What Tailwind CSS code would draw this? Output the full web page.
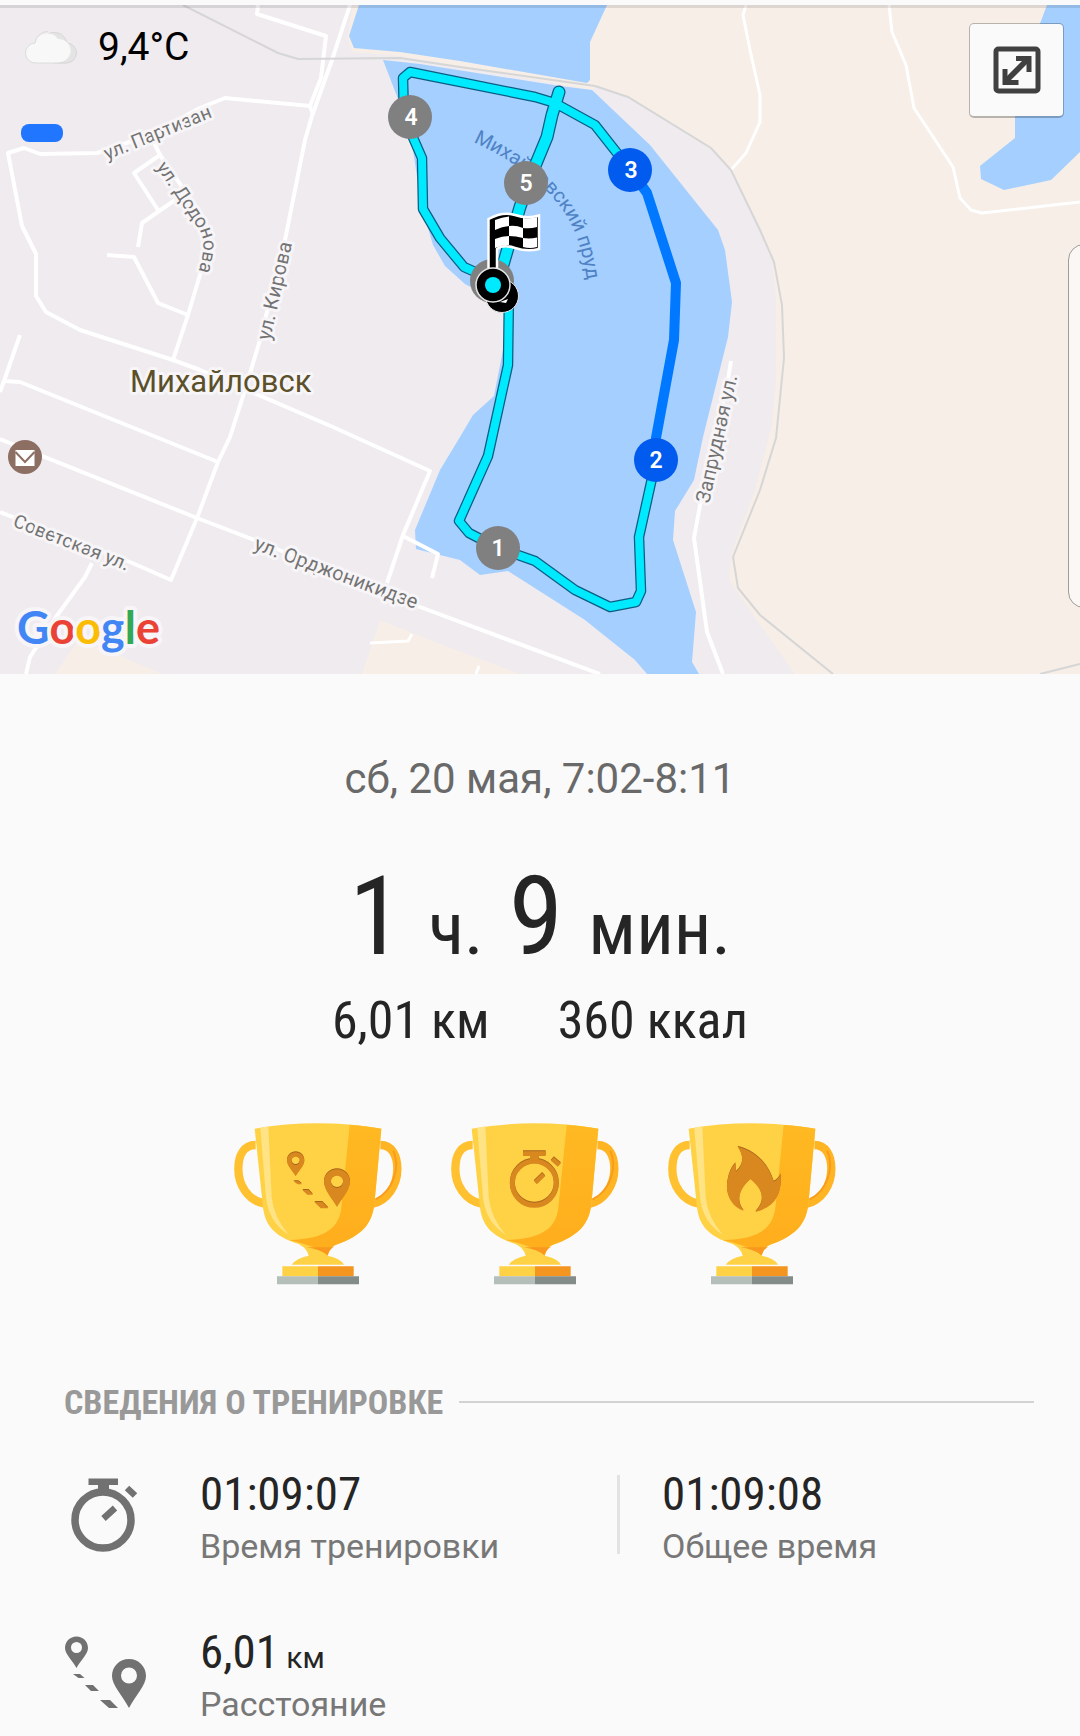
<!DOCTYPE html>
<html lang="ru">
	<head>
		<meta charset="UTF-8" />
		<meta name="viewport" content="width=device-width, initial-scale=1.0" />
		<title>Тренировка</title>
		<script src="https://cdn.jsdelivr.net/npm/@tailwindcss/browser@4"></script>
	</head>
	<body class="bg-[#fafafa] pt-[5px] font-['Roboto',sans-serif] text-[#252525]">
		<!-- map -->
		<section class="relative overflow-hidden">
			<svg viewBox="0 5 1080 669" class="block w-full bg-[#efebef]" role="img" aria-label="Карта маршрута">
				<!-- land -->
				<g fill="#f6eee7">
					<path d="M607 5L590 42V82L628 97L711 148L731 170L760 230L772 262L776 300V380L772 425L755 490L731 555L729 580L760 625L795 674H1080V5Z" />
					<path d="M353 5L347 38L352 52L400 56L560 84L592 90L600 84L590 5Z" />
					<path d="M78 640L55 674H162L125 658Z" />
					<path d="M380 620L362 674H520L430 640Z" />
				</g>
				<!-- water -->
				<g fill="#a4cfff">
					<path d="M359 5L349 36L354 48L400 52L460 61L587 83L590 80V42L607 5Z" />
					<path d="M383 60L420 64L560 86L592 90L650 145L718 230L725 250L732 302L728 337L703 437L694 480L675 511L673 540L696 612L692 662L699 674H647L635 660L585 620L508 571L480 575L460 560L440 555L416 549L415 530L440 470L460 437L473 415L494 396L503 350L509 300L480 292L465 284L445 266L433 245L422 208L416 170L410 130Z" />
					<path d="M1047 5L1015 90V138L980 166L981 179L1004 190L1051 180L1080 152V5Z" />
				</g>
				<!-- streets -->
				<g fill="none" stroke="#fff" stroke-width="4" stroke-linejoin="round">
					<path d="M258 5L257 14L326 36L321 78L310 106L313 114" />
					<path d="M350 5L332 60L312 116L305 140L285 240L260 340L245 390L230 437L218 462L197 518L171 580L130 562L0 512" />
					<path d="M310 106L225 98L200 108L150 135L97 153L40 154L24 148L8 153L22 226L36 254V296L46 312L80 330L173 360L200 370L333 427L430 471L403 535L387 583" />
					<path d="M403 536L438 554L432 578" />
					<path d="M150 135L160 155L134 173L158 210M175 200L142 223L138 247M107 255L134 257L158 303L188 315" />
					<path d="M160 155L205 220L208 248L188 315L173 360" />
					<path d="M20 335L4 381L0 392M4 381L20 382L218 462" />
					<path d="M0 439L197 518L257 541L420 607L600 674" />
					<path d="M92 563L85 577L56 617L30 657L26 674" />
					<path d="M731 361L728 380L701 500L694 538L707 632L723 674" />
					<path d="M746 5L743 15L750 50L760 95V122L746 153L731 170" stroke-width="3" />
					<path d="M889 5L892 32L906 65L914 108L953 167L960 198L971 210L982 213L1080 202" stroke-width="3" />
					<path d="M370 643L408 641L412 634M479 666L476 674" stroke-width="3" />
				</g>
				<!-- railway -->
				<g fill="none" stroke="#d6d6d6" stroke-width="2">
					<path d="M183 5L278 53L298 59L400 58L460 67L595 86L628 97L711 148L731 170L760 230L774 262L782 305L784 358L776 438L760 490L733 557L738 588L760 615L833 674" />
					<path d="M1040 674L1080 664" />
				</g>

				<!-- labels -->
				<defs>
					<path id="partizan" d="M107 160L230 110" />
					<path id="dodonova" d="M156 167L198 228Q209 243 197 275" />
					<path id="kirova" d="M270 341L296 226" />
					<path id="zaprud" d="M709 504L741 360" />
					<path id="sovet" d="M12 526L150 580" />
					<path id="ordzh" d="M253 549L450 622" />
					<path id="prud" d="M473 142Q548 176 573 228Q583 248 590 300" />
				</defs>
				<g font-family="Roboto" font-size="20" fill="#737373" stroke="#f7f5f7" stroke-width="6" stroke-linejoin="round" paint-order="stroke">
					<text font-size="19"><textPath href="#partizan">ул. Партизан</textPath></text>
					<text font-size="19"><textPath href="#dodonova">ул. Додонова</textPath></text>
					<text><textPath href="#kirova">ул. Кирова</textPath></text>
					<text><textPath href="#zaprud">Запрудная ул.</textPath></text>
					<text font-size="19"><textPath href="#sovet">Советская ул.</textPath></text>
					<text><textPath href="#ordzh">ул. Орджоникидзе</textPath></text>
					<text x="130" y="392" font-size="31" fill="#5b5029">Михайловск</text>
				</g>
				<text font-family="Roboto" font-size="20" fill="#4f82c4"><textPath href="#prud">Михайловский пруд</textPath></text>

				<!-- post office -->
				<circle cx="25" cy="457" r="17" fill="#8d6e63" />
				<path d="M15.500 450H34.500V466H15.500Z" fill="#fff" />
				<path d="M15.500 452L25 462L34.500 452" fill="none" stroke="#8d6e63" stroke-width="2" />

				<!-- route -->
				<g fill="none" stroke-linejoin="round">
					<g stroke="#0c5c80" stroke-width="10.500">
						<path d="M509 290L508 365L488 456L459 521L469 533L498 548L535 561L575 590L610 607L636 602L641 591L639 537L656 460" />
						<path d="M632 172L595 125L555 103L535 97L410 72L403 78L404 117L422 158L423 209L440 238L464 267L493 280" />
						<path d="M559 92L552 115L547 137L535 166L520 207L503 265" stroke-width="13" stroke-linecap="round" />
					</g>
					<g stroke="#00eaff" stroke-width="8">
						<path d="M509 290L508 365L488 456L459 521L469 533L498 548L535 561L575 590L610 607L636 602L641 591L639 537L656 460" />
						<path d="M632 172L595 125L555 103L535 97L410 72L403 78L404 117L422 158L423 209L440 238L464 267L493 280" />
						<path d="M559 92L552 115L547 137L535 166L520 207L503 265" stroke-width="10.500" stroke-linecap="round" />
					</g>
					<path d="M656 460V438L674 340L676 283L647 193L632 172" stroke="#0078ff" stroke-width="10" />
				</g>
				<g fill="#808080">
					<circle cx="410" cy="117" r="22" />
					<circle cx="526" cy="183" r="22" />
					<circle cx="498" cy="548" r="22" />
					<circle cx="492" cy="281" r="22" />
				</g>
				<g fill="#005bee">
					<circle cx="630" cy="170" r="22" />
					<circle cx="656" cy="460" r="22" />
				</g>
				<g font-family="Roboto" font-size="23" font-weight="600" fill="#fff" text-anchor="middle">
					<text x="411" y="125">4</text>
					<text x="526" y="191">5</text>
					<text x="631" y="178">3</text>
					<text x="656" y="468">2</text>
					<text x="498" y="556">1</text>
				</g>
				<!-- start and finish -->
				<circle cx="502" cy="296" r="16.500" fill="#000" stroke="#e6e6e6" />
				<path d="M500 302L508 299L506 303Z" fill="#fff" />
				<path d="M488.500 219Q503 211 515 215Q527 219 539 215.500V249Q527 252 515 248Q503 244 497 249V272H488.500Z" fill="#000" stroke="#fff" stroke-width="2.500" />
				<g fill="#fff">
					<path d="M495 220Q502 217 509 216.500V226Q502 226.500 495 230Z" />
					<path d="M523 218Q531 219 537 217V227Q530 229 523 228Z" />
					<path d="M509 226Q516 225 523 228V238Q516 236 509 236Z" />
					<path d="M495 239Q502 236 509 236V245Q502 245 495 248Z" />
					<path d="M523 238Q530 239 537 237.500V247Q530 249 523 247Z" />
				</g>
				<circle cx="493" cy="285" r="17" fill="#000" stroke="#e6e6e6" stroke-width="1.500" />
				<circle cx="493" cy="285" r="8" fill="#00eaff" />

				<g font-family="Lato" font-size="45" font-weight="700" stroke="#f7f5f7" stroke-width="8" stroke-linejoin="round" paint-order="stroke">
					<text x="17" y="644"><tspan fill="#4285f4">G</tspan><tspan fill="#ea4335">o</tspan><tspan fill="#fbbc05">o</tspan><tspan fill="#4285f4">g</tspan><tspan fill="#34a853">l</tspan><tspan fill="#ea4335">e</tspan></text>
				</g>
			</svg>

			<div class="absolute inset-x-0 top-0 h-[3px] bg-black/10"></div>
			<div class="absolute left-6 top-5 flex items-center gap-5 text-[39px] leading-[44px] text-black">
				<svg viewBox="0 0 54 36" class="h-9 w-[54px]">
					<path d="M30 34H42A10 10 0 0 0 43 14A13 13 0 0 0 24 5Z" fill="#e4e4e4" stroke="#d8d8d8" />
					<path d="M12 34A10 10 0 0 1 11 14A13 13 0 0 1 34 10A11 11 0 0 1 36 33Q34 34 30 34Z" fill="#f8f8f8" />
					<path d="M42 34H12A10 10 0 0 1 11 14A13 13 0 0 1 24 2.500" fill="none" stroke="#dcdcdc" />
				</svg>
				<span>9,4°C</span>
			</div>
			<div class="absolute left-[21px] top-[119px] h-[18px] w-[42px] rounded-lg bg-[#2176ff]"></div>
			<button class="absolute right-4 top-[18px] grid size-[95px] place-items-center rounded-[5px] border border-b-2 border-black/25 bg-[#fafafa] bg-clip-padding" aria-label="Развернуть карту">
				<svg viewBox="0 0 48 48" class="size-12" fill="none" stroke="#404040">
					<rect x="3" y="3" width="42" height="42" rx="2.500" stroke-width="5" />
					<path d="M14 34L34 14" stroke-width="5.500" />
					<path d="M23 12.500H36V26M12 23V36.500H25.500" stroke-width="5" />
				</svg>
			</button>
			<div class="absolute -right-6 top-[239px] h-[364px] w-9 rounded-2xl border border-[#a09c99] bg-[#faf7f5]"></div>
		</section>

		<!-- summary -->
		<section class="flex flex-col items-center pt-[80px]">
			<p class="text-[42px] leading-[50px] text-[#696969]">сб, 20 мая, 7:02-8:11</p>
			<h1 class="mt-[57px] flex items-baseline font-['Roboto_Condensed','Roboto',sans-serif] text-[110px] leading-[112px] whitespace-pre">1 <span class="text-[74px]">ч.</span> 9 <span class="text-[74px]">мин.</span></h1>
			<p class="mt-1 flex gap-[68px] font-['Roboto_Condensed','Roboto',sans-serif] text-[52px] leading-[64px]">
				<span>6,01 км</span>
				<span>360 ккал</span>
			</p>
			<div class="mt-[70px] flex gap-[39px]">
				<svg viewBox="41 67 534 486" class="h-[162px] w-[178px]">
					<defs>
						<linearGradient id="shade" x1="0" x2="0" y1="0" y2="1">
							<stop offset="0" stop-color="#ffb922" />
							<stop offset="1" stop-color="#ffad1c" />
						</linearGradient>
						<g id="cup">
							<path d="M106 133C70 133 54 165 54 205C54 255 85 300 130 308" fill="none" stroke="#ffc130" stroke-width="25" />
							<path d="M480 133C515 133 531 165 531 205C531 255 500 300 455 310" fill="none" stroke="#ffb424" stroke-width="25" />
							<path d="M519 150C540 200 520 270 466 296" fill="none" stroke="#f99c1c" stroke-width="6" />
							<path d="M103 84Q290 52 483 84L463 300C458 370 425 405 345 433Q325 445 322 465Q360 472 371 492H214Q228 472 265 465Q262 445 235 430C160 405 130 375 126 300Z" fill="#ffd246" />
							<path d="M388 73Q440 76 483 84L463 300C458 370 425 405 345 433Q330 440 322 465Q300 440 205 418C320 415 360 380 364 310Z" fill="url(#shade)" />
							<path d="M258 440H340Q325 447 321 464Q300 446 258 440Z" fill="#f9981d" />
							<path d="M120 81L144 77L154 290Q160 350 205 402Q145 365 137 290Z" fill="#ffe384" />
							<path d="M186 497H293V527H186Z" fill="#ffd246" />
							<path d="M293 497H400V527H293Z" fill="#f4951f" />
							<path d="M170 527H293V551H170Z" fill="#b4bfba" />
							<path d="M293 527H416V551H293Z" fill="#838c88" />
						</g>
						<g id="pins" fill-rule="evenodd">
							<path d="M226 152C211 152 200 163 200 178C200 192 216 207 226 224C236 207 252 192 252 178C252 163 241 152 226 152ZM226 165A12.500 12.500 0 1 1 226 190A12.500 12.500 0 1 1 226 165Z" />
							<path d="M350 203C328 203 311 220 311 241C311 265 335 290 350 316C365 290 389 265 389 241C389 220 372 203 350 203ZM350 222A18.500 18.500 0 1 1 350 259A18.500 18.500 0 1 1 350 222Z" />
							<path d="M219 239H234L245 248H232ZM246 265H265L278 279H261ZM282 301H306L324 320H301Z" />
						</g>
					</defs>
					<use href="#cup" />
					<use href="#pins" fill="#a8651c" />
					<use href="#pins" y="3" fill="#d9871f" />
				</svg>
				<svg viewBox="41 67 534 486" class="h-[162px] w-[178px]">
					<defs>
						<g id="watch">
							<circle cx="291" cy="245" r="66" fill="none" stroke-width="15" />
							<path d="M257 149H325V163H304V177H278V163H257Z" stroke="none" />
							<path d="M345 172L366 190" fill="none" stroke-width="14" />
							<path d="M294 243L319 219" fill="none" stroke-width="13" />
						</g>
					</defs>
					<use href="#cup" />
					<use href="#watch" fill="#a8651c" stroke="#a8651c" />
					<use href="#watch" y="3" fill="#d9871f" stroke="#d9871f" />
				</svg>
				<svg viewBox="41 67 534 486" class="h-[162px] w-[178px]">
					<defs>
						<path id="flame" d="M250 135C310 150 345 195 358 240Q371 235 379 218C383 275 365 315 303 331C338 295 322 260 288 233C252 265 245 300 268 328C225 312 212 270 220 235Q225 205 243 185L245 210C268 190 270 165 250 135Z" />
					</defs>
					<use href="#cup" />
					<use href="#flame" fill="#a8651c" />
					<use href="#flame" y="3" fill="#d9871f" />
				</svg>
			</div>
		</section>

		<!-- details -->
		<section class="pt-[94px] pr-[46px] pl-16">
			<h2 class="flex items-center gap-4 font-['Roboto_Condensed','Roboto',sans-serif] text-[34px] leading-[46px] font-bold text-[#999]">
				СВЕДЕНИЯ О ТРЕНИРОВКЕ
				<span class="h-[2px] grow bg-[#d3d3d3]"></span>
			</h2>
			<div class="mt-10 flex items-start">
				<svg viewBox="0 0 136 90" class="mt-0.5 h-[90px] w-[136px] shrink-0" fill="none" stroke="#717171">
					<circle cx="39" cy="53" r="28" stroke-width="7.500" />
					<path d="M24.500 11.500H54V18H45V25H34V18H24.500Z" fill="#717171" stroke="none" />
					<path d="M63 21L71 28.500M39.500 51.500L51 41" stroke-width="6.500" />
				</svg>
				<dl class="grid grow grid-cols-2">
					<div class="flex flex-col-reverse">
						<dt class="text-[34px] leading-[46px] text-[#777]">Время тренировки</dt>
						<dd class="font-['Roboto_Condensed','Roboto',sans-serif] text-[47px] leading-[58px]">01:09:07</dd>
					</div>
					<div class="relative flex flex-col-reverse pl-[45px] before:absolute before:top-[10px] before:left-0 before:h-[79px] before:w-[3px] before:bg-[#e3e3e3]">
						<dt class="text-[34px] leading-[46px] text-[#777]">Общее время</dt>
						<dd class="font-['Roboto_Condensed','Roboto',sans-serif] text-[47px] leading-[58px]">01:09:08</dd>
					</div>
				</dl>
			</div>
			<div class="mt-[54px] flex items-start">
				<svg viewBox="0 0 136 90" class="mt-0.5 h-[90px] w-[136px] shrink-0" fill="#717171" fill-rule="evenodd">
					<path d="M12.500 11.500C6 11.500 1 16.500 1 23C1 29 8 35 12.500 43C17 35 24 29 24 23C24 16.500 19 11.500 12.500 11.500ZM12.500 17A5.500 5.500 0 1 1 12.500 28A5.500 5.500 0 1 1 12.500 17Z" />
					<path d="M65 34C55.500 34 48 41.500 48 51C48 60 58 70 65 83C72 70 82 60 82 51C82 41.500 74.500 34 65 34ZM65 42.500A8 8 0 1 1 65 58.500A8 8 0 1 1 65 42.500Z" />
					<path d="M9 49H16L20.500 53H14.500ZM21 60H29L35 66H27ZM36 75H46L54 83H45Z" />
				</svg>
				<dl class="flex flex-col-reverse">
					<dt class="text-[34px] leading-[46px] text-[#777]">Расстояние</dt>
					<dd class="font-['Roboto_Condensed','Roboto',sans-serif] text-[47px] leading-[58px]">6,01<span class="font-['Roboto',sans-serif] text-[30px] leading-none"> км</span></dd>
				</dl>
			</div>
		</section>
	</body>
</html>
